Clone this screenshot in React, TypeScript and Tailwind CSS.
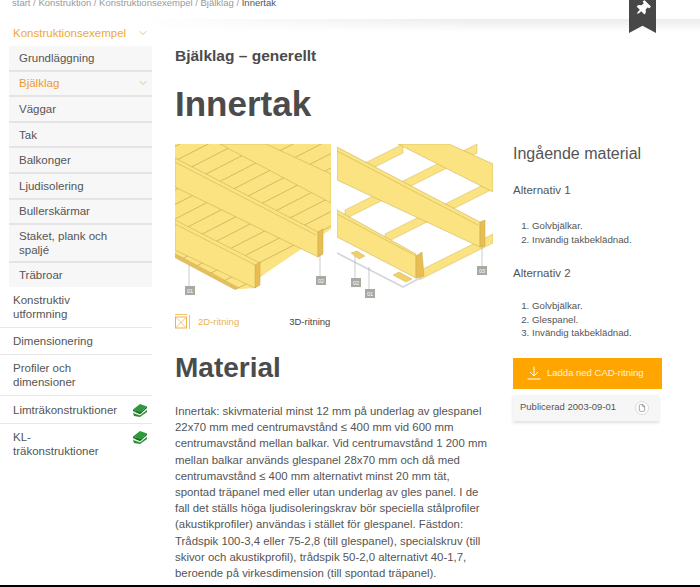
import { FaThumbtack } from "react-icons/fa";
import { ChevronDown, File } from "lucide-react";

const plankLines = Array.from({ length: 26 }, (_, i) => 132 + i * 14.5);

const Tag = ({ x, y, n }: { x: number; y: number; n: string }) => (
  <g>
    <rect x={x} y={y} width="10" height="9" fill="#a9a9a4" />
    <text x={x + 5} y={y + 6.5} fontSize="5.5" fill="#fff" textAnchor="middle" fontFamily="Liberation Sans">
      {n}
    </text>
  </g>
);

const Beam = ({ pts, end }: { pts: string; end: string }) => (
  <g stroke="#c4a94c" strokeWidth="0.5">
    <polygon points={pts} fill="#fbe382" />
    <polygon points={end} fill="#e9bd52" />
  </g>
);

const DECK = "175,144 331,144 331,229 260,277 255,288 240,289 175,253";

const Drawing2D = () => (
  <svg viewBox="175 144 156 156" className="w-[156px] h-[156px]">
    <polygon points={DECK} fill="#fbe382" />
    <polygon points="175,253 240,288 235,290 175,258" fill="#e2bf5f" />
    <clipPath id="deck">
      <polygon points={DECK} />
    </clipPath>
    <g clipPath="url(#deck)" stroke="#a8924a" strokeWidth="0.5">
      {plankLines.map((y0) => (
        <line key={y0} x1="175" y1={y0} x2="331" y2={y0 - 80} />
      ))}
    </g>
    <Beam pts="220,144 266,144 331,174 331,203" end="" />
    <Beam pts="175,158 318,232 318,257 175,187" end="318,232 323,229 323,254 318,257" />
    <line x1="175" y1="162" x2="316" y2="235" stroke="#c4a94c" strokeWidth="0.5" />
    <Beam pts="175,220 260,263 255,288 175,250" end="255,265 260,262 260,285 255,288" />
    <line x1="175" y1="224" x2="255" y2="265" stroke="#c4a94c" strokeWidth="0.5" />
    <line x1="189" y1="265" x2="189" y2="286" stroke="#aaa" strokeWidth="0.6" />
    <line x1="320" y1="254" x2="320" y2="276" stroke="#aaa" strokeWidth="0.6" />
    <Tag x={185} y={286} n="01" />
    <Tag x={316} y={276} n="02" />
  </svg>
);

const bands = [
  { x1: 362, y0: 177 },
  { x1: 345, y0: 214 },
  { x1: 385, y0: 258 },
  { x1: 420, y0: 312 },
];

const Drawing3D = () => (
  <svg viewBox="337 144 156 156" className="w-[156px] h-[156px]">
    <polygon points="337,252 403,286 493,238 493,240 403,288 337,254" fill="#d6d6e0" />
    <polygon points="351,253 357,251 365,256 359,259" fill="#f2cf68" stroke="#c4a94c" strokeWidth="0.4" />
    <polygon points="393,275 399,272 412,279 406,282" fill="#f2cf68" stroke="#c4a94c" strokeWidth="0.4" />
    <g stroke="#c4a94c" strokeWidth="0.4" fill="#fbe382">
      {bands.map((b) => {
        const a = 0.5 * (b.x1 - 337);
        const e = Math.min(156, 2 * (b.y0 - 144));
        return (
          <polygon
            key={b.y0}
            points={`${b.x1},${b.y0 - a} ${337 + e},${b.y0 - e / 2} ${337 + e},${b.y0 + 9 - e / 2} ${b.x1},${b.y0 + 9 - a}`}
          />
        );
      })}
    </g>
    <Beam pts="398,144 449,144 493,164 493,192" end="" />
    <Beam pts="337,147 480,222 480,247 337,180" end="480,222 485,220 485,246 480,247" />
    <line x1="337" y1="151" x2="478" y2="225" stroke="#c4a94c" strokeWidth="0.5" />
    <Beam pts="337,210 416,254 416,278 337,237" end="416,256 422,252 424,276 416,278" />
    <line x1="337" y1="214" x2="416" y2="256" stroke="#c4a94c" strokeWidth="0.5" />
    <line x1="355" y1="256" x2="355" y2="278" stroke="#aaa" strokeWidth="0.6" />
    <line x1="369" y1="267" x2="369" y2="289" stroke="#aaa" strokeWidth="0.6" />
    <line x1="482" y1="246" x2="482" y2="266" stroke="#aaa" strokeWidth="0.6" />
    <Tag x={351} y={278} n="02" />
    <Tag x={365} y={289} n="01" />
    <Tag x={477} y={266} n="03" />
  </svg>
);

const BookIcon = () => (
  <svg viewBox="0 0 16 14" className="w-[16px] h-[14px]">
    <polygon points="1,10 4,8 12,9 15,6 15,9 8,14 2,13" fill="#2c8a36" />
    <polygon points="1,8 8,11 15,5 15,7 8,12.5 1,10" fill="#e6f2e4" />
    <polygon points="1,6.5 8,1 15,3.5 8,9.5" fill="#2f9a3d" />
    <polygon points="1,6.5 8,9.5 15,3.5 15,5 8,11 1,8" fill="#136b22" />
  </svg>
);

const subItems = ["Grundläggning", "Bjälklag", "Väggar", "Tak", "Balkonger", "Ljudisolering", "Bullerskärmar", "Staket, plank och spaljé", "Träbroar"];

const Sidebar = () => (
  <aside className="w-[152px] shrink-0 text-[11.5px] leading-[14px] text-[#555]">
    <div className="-mt-[1px] flex items-center justify-between h-[24px] pl-[13px] pr-[3px] text-[#f0a92c]">
      <span>Konstruktionsexempel</span>
      <ChevronDown size={12} strokeWidth={1.25} className="text-[#e0953a]" />
    </div>
    <ul className="mt-[1px] ml-[9px]">
      {subItems.map((item) => (
        <li
          key={item}
          className={`flex items-center justify-between pl-[10px] pr-[3px] bg-[#f7f7f7] ${
            item === "Träbroar" ? "py-[5px]" : "border-b-2 border-[#e4e4e4]"
          } ${item.startsWith("Staket") ? "py-[4px]" : "py-[4.8px]"}`}
        >
          <span className={`${item === "Bjälklag" ? "text-[#ee9a2b]" : ""} ${item.startsWith("Staket") ? "max-w-[110px]" : ""}`}>
            {item}
          </span>
          {item === "Bjälklag" && <ChevronDown size={12} strokeWidth={1.25} className="text-[#e0953a]" />}
        </li>
      ))}
    </ul>
    <ul>
      <li className="pl-[13px] py-[6px] border-b border-[#e8e8e8]">
        Konstruktiv
        <br />
        utformning
      </li>
      <li className="pl-[13px] py-[6px] border-b border-[#e8e8e8]">Dimensionering</li>
      <li className="pl-[13px] py-[6px] border-b border-[#e8e8e8]">
        Profiler och
        <br />
        dimensioner
      </li>
      <li className="flex justify-between pl-[13px] pr-[4px] pt-[7px] pb-[6px] border-b border-[#e8e8e8]">
        <span>Limträkonstruktioner</span>
        <BookIcon />
      </li>
      <li className="flex justify-between pl-[13px] pr-[4px] py-[6px]">
        <span>
          KL-
          <br />
          träkonstruktioner
        </span>
        <BookIcon />
      </li>
    </ul>
  </aside>
);

const RightColumn = () => (
  <aside className="w-[149px] ml-[20px] shrink-0 pt-[122px] text-[#555]">
    <h3 className="text-[16px] leading-[20px]">Ingående material</h3>
    <p className="mt-[19px] text-[11.5px] leading-[14px]">Alternativ 1</p>
    <ol className="mt-[22px] pl-[19px] text-[9.7px] leading-[13.5px] list-decimal">
      <li>Golvbjälkar.</li>
      <li>Invändig takbeklädnad.</li>
    </ol>
    <p className="mt-[20px] text-[11.5px] leading-[14px]">Alternativ 2</p>
    <ol className="mt-[19px] pl-[19px] text-[9.7px] leading-[13.5px] list-decimal">
      <li>Golvbjälkar.</li>
      <li>Glespanel.</li>
      <li>Invändig takbeklädnad.</li>
    </ol>
    <div className="mt-[18px] h-[31px] bg-[#ffa500] flex items-center pl-[14px] gap-[6px] text-white/85 text-[9.5px]">
      <svg viewBox="0 0 14 14" className="w-[14px] h-[14px] text-white" fill="none" stroke="currentColor" strokeWidth="1">
        <path d="M7 0.5v9M3 6l4 4 4-4M0.5 13h13" />
      </svg>
      <span>Ladda ned CAD-ritning</span>
    </div>
    <div className="mt-[6px] h-[26px] w-[146px] bg-[#f6f6f6] flex items-center justify-between pl-[7px] pr-[10px] text-[9.5px] shadow-[0_2px_3px_rgba(0,0,0,0.12)]">
      <span>Publicerad 2003-09-01</span>
      <span className="flex items-center justify-center w-[14px] h-[14px] rounded-full border border-[#ddd] bg-white">
        <File size={8} strokeWidth={1.5} />
      </span>
    </div>
  </aside>
);

export default function App() {
  return (
    <div className="relative w-[700px] h-[587px] overflow-hidden bg-white font-['Liberation_Sans',sans-serif]">
      <div className="-mt-[4px] h-[26px] pl-[12px] text-[9.5px] leading-[14px] text-[#999]">
        start / Konstruktion / Konstruktionsexempel / Bjälklag / <span className="text-[#555]">Innertak</span>
      </div>
      <div className="absolute left-[140px] right-0 top-[19px] h-[13px] bg-gradient-to-b from-[#ececec] to-white [mask-image:linear-gradient(to_right,transparent,black_60%)]" />
      <div className="absolute left-[629px] top-0 w-[27px] h-[33px] bg-[#474747] [clip-path:polygon(0_0,100%_0,100%_100%,50%_78%,0_100%)] flex justify-center pt-[1px] text-white">
        <FaThumbtack size={15} className="rotate-45" />
      </div>
      <div className="relative flex">
        <Sidebar />
        <main className="w-[318px] ml-[23px] shrink-0 text-[#4b4b4b]">
          <h2 className="mt-[24px] text-[15.5px] leading-[20px] font-bold">Bjälklag – generellt</h2>
          <h1 className="mt-[18px] text-[35px] leading-[40px] font-bold">Innertak</h1>
          <div className="mt-[20px] flex gap-[6px]">
            <Drawing2D />
            <Drawing3D />
          </div>
          <div className="mt-[14px] flex items-center text-[9.5px] h-[16px]">
            <svg viewBox="0 0 16 16" className="w-[16px] h-[16px] text-[#eeb24a]" fill="none" stroke="currentColor">
              <rect x="0.5" y="3" width="11" height="11" />
              <path d="M1 3.5 11 13.5M11 3.5 1 13.5M14.5 1v14M0 0.5h12" strokeWidth="0.8" />
            </svg>
            <span className="ml-[7px] text-[#eeb24a]">2D-ritning</span>
            <span className="ml-[50px] text-[#444]">3D-ritning</span>
          </div>
          <h2 className="mt-[20px] text-[28px] leading-[36px] font-bold">Material</h2>
          <p className="mt-[17px] text-[11.4px] leading-[16.2px] text-[#555]">
            Innertak: skivmaterial minst 12 mm på underlag av glespanel 22x70 mm med centrumavstånd ≤ 400 mm vid 600 mm centrumavstånd mellan balkar. Vid centrumavstånd 1 200 mm mellan balkar används glespanel 28x70 mm och då med centrumavstånd ≤ 400 mm alternativt minst 20 mm tät, spontad träpanel med eller utan underlag av gles panel. I de fall det ställs höga ljudisoleringskrav bör speciella stålprofiler (akustikprofiler) användas i stället för glespanel. Fästdon: Trådspik 100-3,4 eller 75-2,8 (till glespanel), specialskruv (till skivor och akustikprofil), trådspik 50-2,0 alternativt 40-1,7, beroende på virkesdimension (till spontad träpanel).
          </p>
        </main>
        <RightColumn />
      </div>
      <div className="absolute left-0 right-0 bottom-0 h-[2px] bg-black" />
    </div>
  );
}
